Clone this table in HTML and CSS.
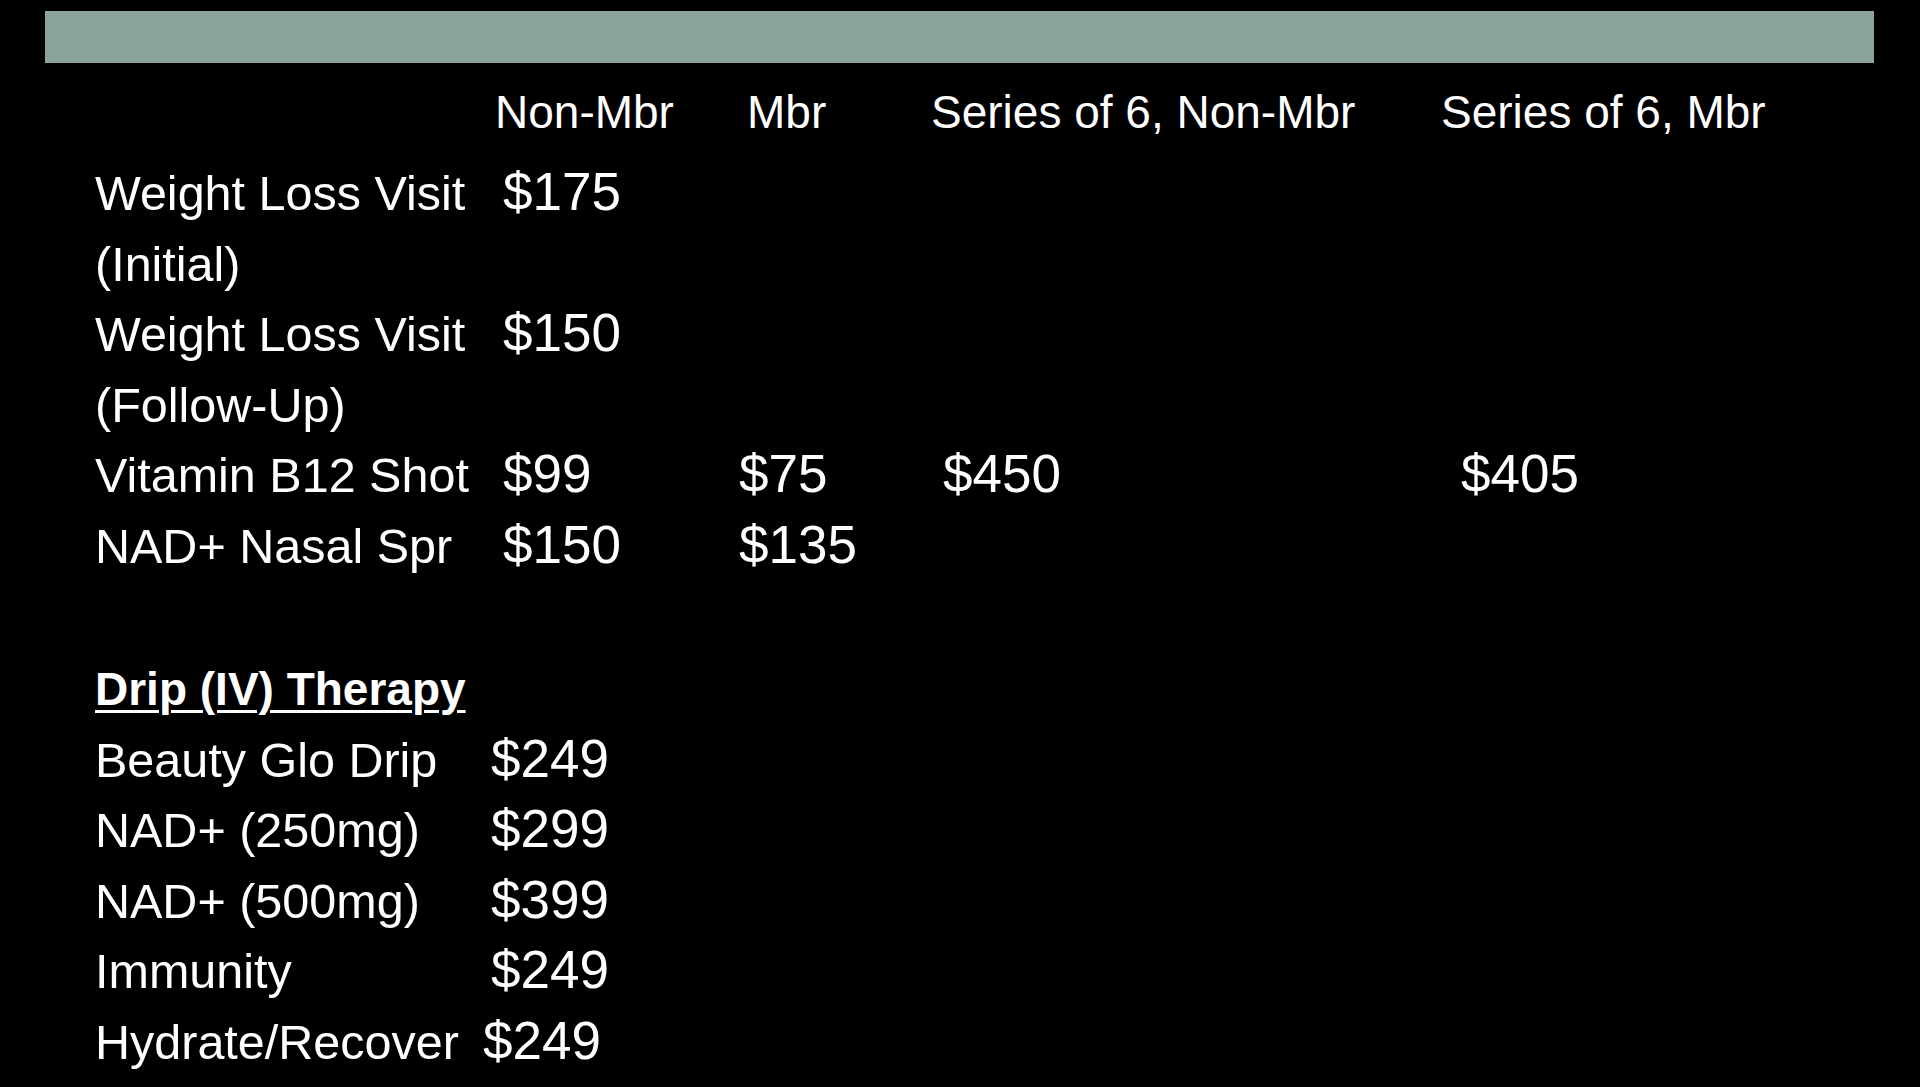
FILE: index.html
```html
<!DOCTYPE html>
<html lang="en">
<head>
<meta charset="utf-8">
<title>Pricing</title>
<link rel="stylesheet" href="styles.css">
</head>
<body>
<main class="page">
  <div class="bar"></div>

  <section class="price-table">
    <div class="row head">
      <span class="label"></span>
      <span class="h1">Non-Mbr</span>
      <span class="h2">Mbr</span>
      <span class="h3">Series of 6, Non-Mbr</span>
      <span class="h4">Series of 6, Mbr</span>
    </div>
    <div class="row">
      <span class="label">Weight Loss Visit (Initial)</span>
      <span class="price v1">$175</span>
      <span class="price v2"></span>
      <span class="price v3"></span>
      <span class="price v4"></span>
    </div>
    <div class="row">
      <span class="label">Weight Loss Visit (Follow-Up)</span>
      <span class="price v1">$150</span>
      <span class="price v2"></span>
      <span class="price v3"></span>
      <span class="price v4"></span>
    </div>
    <div class="row">
      <span class="label nowrap">Vitamin B12 Shot</span>
      <span class="price v1">$99</span>
      <span class="price v2">$75</span>
      <span class="price v3">$450</span>
      <span class="price v4">$405</span>
    </div>
    <div class="row">
      <span class="label nowrap">NAD+ Nasal Spr</span>
      <span class="price v1">$150</span>
      <span class="price v2">$135</span>
      <span class="price v3"></span>
      <span class="price v4"></span>
    </div>
  </section>

  <h2 class="section-title">Drip (IV) Therapy</h2>

  <section class="drip-table">
    <div class="drow"><span class="label">Beauty Glo Drip</span><span class="price dv">$249</span></div>
    <div class="drow"><span class="label">NAD+ (250mg)</span><span class="price dv">$299</span></div>
    <div class="drow"><span class="label">NAD+ (500mg)</span><span class="price dv">$399</span></div>
    <div class="drow"><span class="label">Immunity</span><span class="price dv">$249</span></div>
    <div class="drow"><span class="label nowrap">Hydrate/Recover</span><span class="price dv dv-tight">$249</span></div>
  </section>
</main>
</body>
</html>
```

FILE: styles.css
```css
html, body {
  margin: 0;
  padding: 0;
  background: #000;
}

body {
  color: #fff;
  font-family: "Liberation Sans", Arial, sans-serif;
}

.page {
  padding: 11px 46px 0 45px;
  height: 1087px;
  box-sizing: border-box;
  overflow: hidden;
}

.bar {
  height: 52px;
  background: #8ba39a;
}

.price-table {
  margin-top: 19px;
  padding-left: 50px;
}

.row {
  display: grid;
  grid-template-columns: 400px 242px 194px 510px 1fr;
  align-items: baseline;
  font-size: 48.5px;
  line-height: 70.5px;
}

.row.head {
  font-size: 46px;
  line-height: 60px;
  margin-bottom: 16px;
}

.nowrap {
  white-space: nowrap;
}

.price {
  font-size: 53px;
  line-height: 67.3px;
}

.h2 { padding-left: 10px; }
.v1 { padding-left: 8px; }
.v2 { padding-left: 2px; }
.v3 { padding-left: 12px; }
.v4 { padding-left: 20px; }

.section-title {
  margin: 73px 0 0 50px;
  font-size: 46px;
  line-height: 70.5px;
  font-weight: bold;
  text-decoration: underline;
  text-decoration-thickness: 3px;
  text-underline-offset: 5px;
}

.drip-table {
  padding-left: 50px;
}

.drow {
  display: grid;
  grid-template-columns: 395px 1fr;
  align-items: baseline;
  font-size: 48.5px;
  line-height: 70.5px;
}

.dv {
  padding-left: 1px;
}

.dv.dv-tight {
  padding-left: 0;
  margin-left: -7px;
}
```
